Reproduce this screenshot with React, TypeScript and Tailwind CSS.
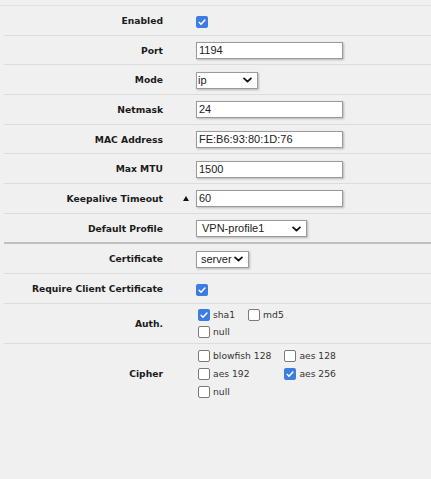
import React from 'react';

const labelFont = { fontFamily: '"DejaVu Sans", Verdana, sans-serif' };
const inputFont = { fontFamily: '"Liberation Sans", Arial, sans-serif' };

const Check = ({ on }: { on?: boolean }) =>
  on ? (
    <span className="inline-flex w-[12px] h-[12px] shrink-0 items-center justify-center rounded-[2px] bg-[#3d7ce0]">
      <svg viewBox="0 0 12 12" className="w-[10px] h-[10px]" fill="none" stroke="white" strokeWidth={1.8} strokeLinecap="round" strokeLinejoin="round">
        <path d="M2.5 6.3l2.3 2.3 4.7-5" />
      </svg>
    </span>
  ) : (
    <span className="inline-block w-[12px] h-[12px] shrink-0 rounded-[2px] border border-[#7a7a7a] bg-white" />
  );

const Chevron = () => (
  <svg viewBox="0 0 10 6" className="w-[9px] h-[6px]" fill="none" stroke="#111" strokeWidth={2} strokeLinecap="round" strokeLinejoin="round">
    <path d="M1.2 1.2L5 4.8l3.8-3.6" />
  </svg>
);

const TextBox = ({ value }: { value: string }) => (
  <div
    className="w-[147px] h-[17px] bg-white border border-[#9a9a9a] shadow-[1px_1px_2px_rgba(0,0,0,0.25)] flex items-center px-[2px] text-[11px] text-[#222] leading-none"
    style={inputFont}
  >
    {value}
  </div>
);

const Select = ({ value, width, pl = 'pl-[5px]' }: { value: string; width: string; pl?: string }) => (
  <div
    className={`${width} ${pl} h-[17px] bg-white border border-[#9a9a9a] shadow-[1px_1px_2px_rgba(0,0,0,0.25)] flex items-center justify-between pr-[5px] text-[11px] text-[#222] leading-none`}
    style={inputFont}
  >
    <span>{value}</span>
    <Chevron />
  </div>
);

const Row = ({
  label,
  children,
  h = 'h-[29.7px]',
  border = 'border-b border-[#dcdcdc]',
  marker,
}: {
  label: string;
  children: React.ReactNode;
  h?: string;
  border?: string;
  marker?: boolean;
}) => (
  <div className={`flex items-center ml-[4px] ${h} ${border}`}>
    <div className="w-[159px] text-right font-bold text-[9.2px] text-[#1b1b1b] pt-[1px]" style={labelFont}>
      {label}
    </div>
    <div className="w-[33px] flex justify-end pr-[7px]">
      {marker && (
        <svg viewBox="0 0 6 5" className="w-[6px] h-[5px]">
          <path d="M3 0L6 5H0z" fill="#111" />
        </svg>
      )}
    </div>
    <div className="flex-1 pt-[1px]">{children}</div>
  </div>
);

const Opt = ({ label, on }: { label: string; on?: boolean }) => (
  <div className="flex items-center gap-[3px] text-[9.2px] text-[#333]" style={labelFont}>
    <Check on={on} />
    <span>{label}</span>
  </div>
);

export default function App() {
  return (
    <div className="w-[431px] h-[479px] bg-[#f0f0f0] overflow-hidden">
      <div className="h-[5px]" />
      <div className="border-t border-[#e2e2e2]">
        <Row label="Enabled">
          <Check on />
        </Row>
        <Row label="Port">
          <TextBox value="1194" />
        </Row>
        <Row label="Mode">
          <Select value="ip" width="w-[62px]" pl="pl-[1px]" />
        </Row>
        <Row label="Netmask">
          <TextBox value="24" />
        </Row>
        <Row label="MAC Address">
          <TextBox value="FE:B6:93:80:1D:76" />
        </Row>
        <Row label="Max MTU">
          <TextBox value="1500" />
        </Row>
        <Row label="Keepalive Timeout" marker>
          <TextBox value="60" />
        </Row>
        <Row label="Default Profile" h="h-[30.5px]" border="border-b-2 border-[#c0c0c0]">
          <Select value="VPN-profile1" width="w-[111px]" />
        </Row>
        <Row label="Certificate">
          <Select value="server" width="w-[53px]" pl="pl-[4px]" />
        </Row>
        <Row label="Require Client Certificate">
          <Check on />
        </Row>
        <Row label="Auth." h="h-[40px]">
          <div className="grid grid-cols-[auto_auto] justify-start gap-x-[13px] pl-[2px] auto-rows-[17px] items-center">
            <Opt label="sha1" on />
            <Opt label="md5" />
            <Opt label="null" />
          </div>
        </Row>
        <Row label="Cipher" h="h-[60px]" border="">
          <div className="grid grid-cols-[auto_auto] justify-start gap-x-[13px] pl-[2px] auto-rows-[18px] items-center">
            <Opt label="blowfish 128" />
            <Opt label="aes 128" />
            <Opt label="aes 192" />
            <Opt label="aes 256" on />
            <Opt label="null" />
          </div>
        </Row>
      </div>
    </div>
  );
}
